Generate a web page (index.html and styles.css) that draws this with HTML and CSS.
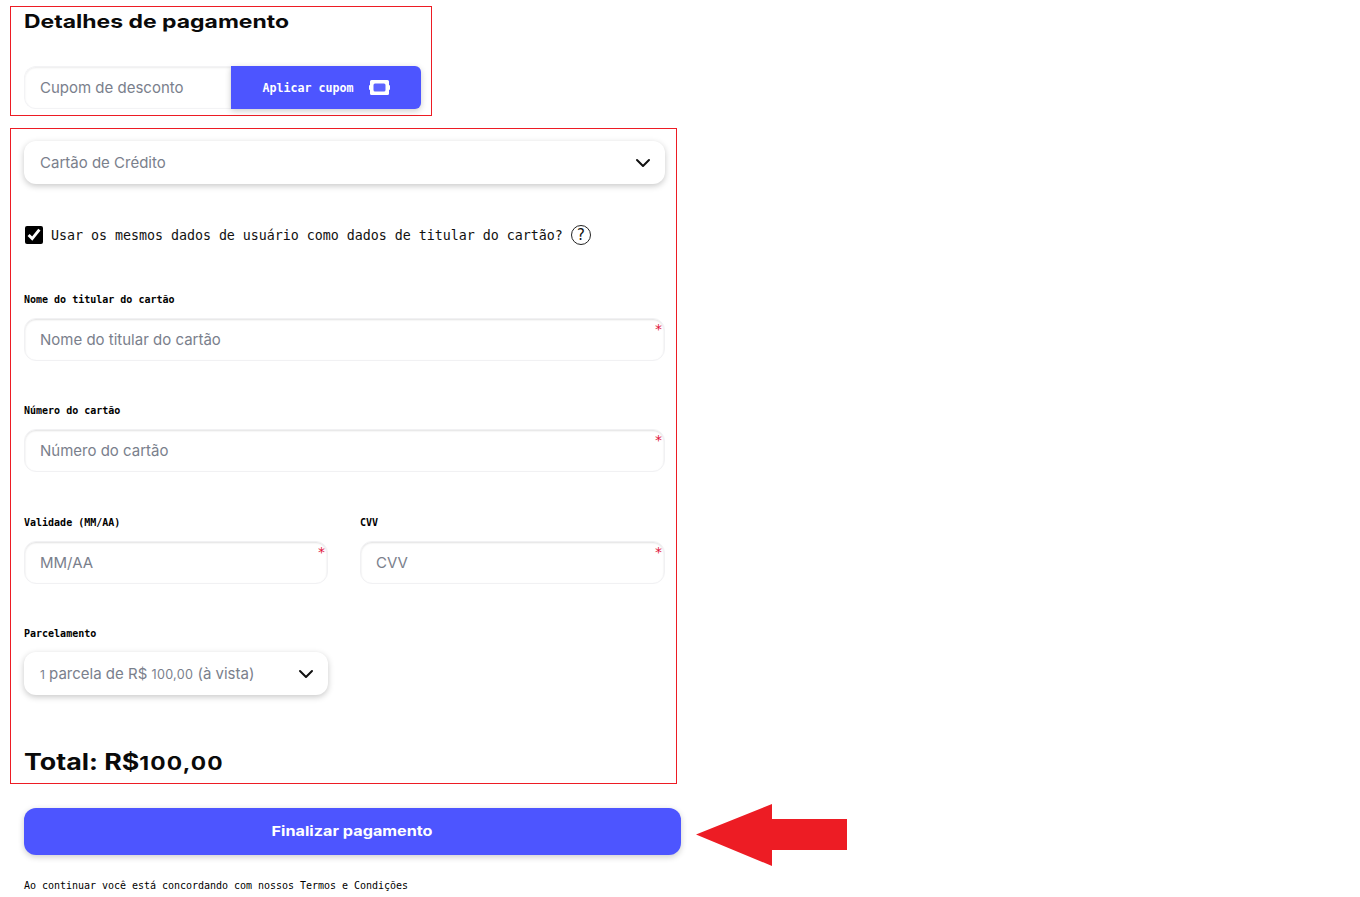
FILE: index.html
```html
<!DOCTYPE html>
<html lang="pt-BR">
<head>
<meta charset="utf-8">
<title>Detalhes de pagamento</title>
<link rel="stylesheet" href="styles.css">
</head>
<body>
<main class="page">
  <section class="box box-coupon">
    <h1 class="title"><span class="wide">Detalhes de pagamento</span></h1>
    <div class="coupon">
      <input class="coupon-input" type="text" placeholder="Cupom de desconto">
      <button class="coupon-btn" type="button">
        <span>Aplicar cupom</span>
        <svg class="ticket" width="21" height="15" viewBox="0 0 21 15"><path d="M2.5 0h16A1.5 1.5 0 0 1 20 1.5V4.6a.6.6 0 0 0 .4.6.5.5 0 0 1 .6.5v3.6a.5.5 0 0 1-.6.5.6.6 0 0 0-.4.6v3.1a1.5 1.5 0 0 1-1.5 1.5h-16A1.5 1.5 0 0 1 1 13.5v-3.1a.6.6 0 0 0-.4-.6.5.5 0 0 1-.6-.5V5.7a.5.5 0 0 1 .6-.5.6.6 0 0 0 .4-.6V1.5A1.5 1.5 0 0 1 2.5 0Z" fill="#fff"/><rect x="4.5" y="3.5" width="12" height="8" rx="1.5" fill="#5d64ff"/></svg>
      </button>
    </div>
  </section>

  <section class="box box-form">
    <div class="select" role="combobox" aria-expanded="false">
      <span>Cartão de Crédito</span>
      <svg class="chevron" width="16" height="10" viewBox="0 0 16 10" fill="none"><path d="M2 2l6 6 6-6" stroke="#111" stroke-width="2" stroke-linecap="round" stroke-linejoin="round"/></svg>
    </div>

    <label class="check-row">
      <input class="check" type="checkbox" checked>
      <span>Usar os mesmos dados de usuário como dados de titular do cartão?</span>
      <span class="help">?</span>
    </label>

    <div class="field field-name">
      <label class="label">Nome do titular do cartão</label>
      <div class="input-wrap"><input class="input" type="text" placeholder="Nome do titular do cartão"><span class="req">*</span></div>
    </div>

    <div class="field field-number">
      <label class="label">Número do cartão</label>
      <div class="input-wrap"><input class="input" type="text" placeholder="Número do cartão"><span class="req">*</span></div>
    </div>

    <div class="cols">
      <div class="field">
        <label class="label">Validade (MM/AA)</label>
        <div class="input-wrap"><input class="input" type="text" placeholder="MM/AA"><span class="req">*</span></div>
      </div>
      <div class="field">
        <label class="label">CVV</label>
        <div class="input-wrap"><input class="input" type="text" placeholder="CVV"><span class="req">*</span></div>
      </div>
    </div>

    <div class="cols cols-install">
      <div class="field">
        <label class="label">Parcelamento</label>
        <div class="select" role="combobox" aria-expanded="false">
          <span><span class="num">1</span> parcela de R$ <span class="num num-small">100,00</span> (à vista)</span>
          <svg class="chevron" width="16" height="10" viewBox="0 0 16 10" fill="none"><path d="M2 2l6 6 6-6" stroke="#111" stroke-width="2" stroke-linecap="round" stroke-linejoin="round"/></svg>
        </div>
      </div>
    </div>

    <h2 class="total"><span class="wide wide-total">Total: R$<span class="num num-total">100,00</span></span></h2>
  </section>

  <div class="submit-row">
    <button class="submit" type="button"><span class="wide-center">Finalizar pagamento</span></button>
    <svg class="arrow" width="152" height="62" viewBox="0 0 152 62"><path d="M0 30.5 76 0v15h75v31H76v16Z" fill="#ED1C24"/></svg>
  </div>

  <p class="terms">Ao continuar você está concordando com nossos Termos e Condições</p>
</main>
</body>
</html>
```

FILE: styles.css
```css
* { box-sizing: border-box; }
html, body { margin: 0; background: #fff; }
body { font-family: "Inter", sans-serif; color: #000; }
.page { padding: 6px 0 0 10px; width: 900px; }
.box { border: 1px solid #ED1C24; padding: 0 11px 0 13px; }
.box-coupon { width: 422px; height: 110px; }
.box-form { width: 667px; height: 656px; margin-top: 12px; padding-top: 12px; }
.title, .total { font-family: "Inter", sans-serif; font-weight: 700; margin: 0; color: #0a0a0a; }
.title { font-size: 18.5px; line-height: 28px; height: 59px; }
.wide { display: inline-block; transform: scaleX(1.24); transform-origin: left center; white-space: nowrap; }
.wide-total { transform: scaleX(1.19); }
.wide-center { display: inline-block; transform: scaleX(1.2); transform-origin: center; white-space: nowrap; }
.num { font-size: 0.8em; }
.num-small { font-size: 0.84em; letter-spacing: 0.3px; }
.num-total { font-size: 0.85em; letter-spacing: 1px; }
.coupon { display: flex; height: 43px; width: 397px; }
.coupon-input, .input, .select {
  font-family: "Inter", sans-serif; font-size: 15px; color: #7a808c; background: #fff;
  height: 43px; width: 100%; padding: 0 15px; outline: none;
}
.coupon-input::placeholder, .input::placeholder { color: #7a808c; opacity: 1; }
.coupon-input {
  flex: 0 0 207px; width: 207px; border: 1px solid #f3f3f5; border-right: 0;
  border-radius: 12px 0 0 12px; box-shadow: inset 0 1px 2px rgba(0,0,0,.08);
}
.coupon-btn {
  flex: 1; display: flex; align-items: center; justify-content: center; gap: 15px;
  background: #4D55FF; color: #fff; border: 0; border-radius: 0 6px 6px 0;
  font-family: "DejaVu Sans Mono", monospace; font-weight: 700; font-size: 11.67px;
  box-shadow: 0 2px 6px rgba(0,0,0,.2); padding: 0;
}
.input-wrap { position: relative; }
.select {
  display: flex; align-items: center; justify-content: space-between;
  padding: 0 14px 0 16px; border-radius: 12px;
  box-shadow: 0 2px 6px rgba(0,0,0,.22);
}
.check-row {
  display: flex; align-items: center; height: 22px; margin-top: 40px;
  font-family: "DejaVu Sans Mono", monospace; font-size: 13.33px; letter-spacing: -0.03px; color: #111;
}
.check { width: 18px; height: 18px; margin: 0 8px 0 1px; accent-color: #000; }
.help {
  width: 20px; height: 20px; margin-left: 8px; border: 1.3px solid #222; border-radius: 50%;
  display: flex; align-items: center; justify-content: center; font-size: 15px;
}
.label {
  display: block; font-family: "DejaVu Sans Mono", monospace; font-weight: 700;
  font-size: 10px; line-height: 14px; height: 25px; color: #000;
}
.field-name { margin-top: 47px; }
.field-number { margin-top: 43px; }
.cols { display: grid; grid-template-columns: 304px 305px; column-gap: 32px; margin-top: 44px; }
.cols-install { margin-top: 43px; }
.input {
  display: block; border: 1px solid #f1f1f3; border-radius: 12px;
  box-shadow: inset 0 1px 2px rgba(0,0,0,.12);
}
.req {
  position: absolute; top: 4px; right: 3px; font-size: 14px; line-height: 14px;
  color: #e0143c; font-family: "DejaVu Sans", sans-serif;
}
.total { font-size: 22.5px; line-height: 32px; margin-top: 51px; }
.submit-row { position: relative; margin: 24px 0 0 14px; width: 657px; }
.submit {
  display: block; width: 657px; height: 47px; border: 0; border-radius: 12px; padding: 0 0 1px;
  background: #4D55FF; color: #fff; box-shadow: 0 2px 6px rgba(0,0,0,.2);
  font-family: "Inter", sans-serif; font-weight: 700; font-size: 13.5px;
}
.arrow { position: absolute; left: 672px; top: -4px; }
.terms {
  margin: 24px 0 0 14px; font-family: "DejaVu Sans Mono", monospace; font-size: 10px;
  letter-spacing: -0.02px; line-height: 14px; color: #000;
}
```
